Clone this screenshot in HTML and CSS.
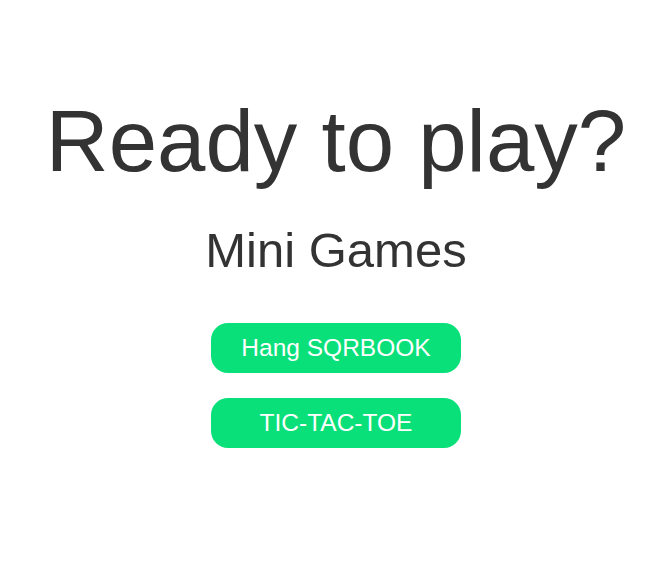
FILE: index.html
```html
<!DOCTYPE html>
<html>
<head>
<meta charset="utf-8">
<link rel="stylesheet" href="styles.css">
</head>
<body>
<main class="page">
  <h1 class="title">Ready to play?</h1>
  <h2 class="subtitle">Mini Games</h2>
  <div class="games">
    <button class="game-btn">Hang SQRBOOK</button>
    <button class="game-btn">TIC-TAC-TOE</button>
  </div>
</main>
</body>
</html>
```
FILE: styles.css
```css
html, body {
  margin: 0;
  padding: 0;
  background: #ffffff;
}
body {
  font-family: "Liberation Sans", Arial, sans-serif;
  color: #333333;
}
.page {
  display: flex;
  flex-direction: column;
  align-items: center;
  padding: 93px 0 0 12px;
}
.title {
  margin: 0;
  font-size: 87px;
  font-weight: 400;
  line-height: 96px;
}
.subtitle {
  margin: 35px 0 0 0;
  font-size: 49px;
  font-weight: 400;
  line-height: 52px;
}
.games {
  display: flex;
  flex-direction: column;
  gap: 25px;
  margin-top: 47px;
}
.game-btn {
  width: 250px;
  height: 50px;
  border: none;
  border-radius: 17px;
  background: #0ae07a;
  color: #ffffff;
  font-family: "Liberation Sans", Arial, sans-serif;
  font-size: 24.5px;
  padding: 0;
}
```
